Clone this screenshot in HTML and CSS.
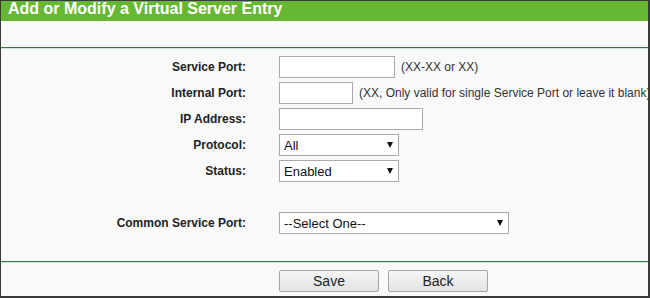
FILE: index.html
```html
<!DOCTYPE html>
<html lang="en">
<head>
    <meta charset="UTF-8">
    <title>Virtual Server</title>
    <link rel="stylesheet" href="styles.css">
</head>
<body>
    <div class="panel">
        <!-- Title bar -->
        <div class="title">Add or Modify a Virtual Server Entry</div>
        <div class="spacer"></div>
        <div class="divider"></div>

        <!-- Entry fields -->
        <form class="fields">
            <div class="row">
                <label class="label">Service Port:</label>
                <input type="text" class="field port">
                <span class="hint">(XX-XX or XX)</span>
            </div>
            <div class="row">
                <label class="label">Internal Port:</label>
                <input type="text" class="field internal">
                <span class="hint">(XX, Only valid for single Service Port or leave it blank)</span>
            </div>
            <div class="row">
                <label class="label">IP Address:</label>
                <input type="text" class="field ip">
            </div>
            <div class="row">
                <label class="label">Protocol:</label>
                <span class="select-wrap">
                    <select class="select">
                        <option>All</option>
                        <option>TCP</option>
                        <option>UDP</option>
                    </select>
                </span>
            </div>
            <div class="row">
                <label class="label">Status:</label>
                <span class="select-wrap">
                    <select class="select">
                        <option>Enabled</option>
                        <option>Disabled</option>
                    </select>
                </span>
            </div>
            <div class="row common">
                <label class="label">Common Service Port:</label>
                <span class="select-wrap wide">
                    <select class="select">
                        <option>--Select One--</option>
                    </select>
                </span>
            </div>
        </form>

        <div class="divider"></div>

        <!-- Buttons -->
        <div class="actions">
            <button type="button" class="btn">Save</button>
            <button type="button" class="btn">Back</button>
        </div>
    </div>
</body>
</html>
```

FILE: styles.css
```css
/* General Reset */
* {
    margin: 0;
    padding: 0;
    box-sizing: border-box;
}

body {
    font-family: 'Liberation Sans', Arial, sans-serif;
    background: #f9f9f9;
    color: #222;
    width: 650px;
    height: 298px;
    overflow: hidden;
}

/* Outer frame */
.panel {
    height: 298px;
    border-top: 1px solid #3a3a3a;
    border-left: 1px solid #3a3a3a;
    border-right: 2px solid #3a3a3a;
    border-bottom: 2px solid #3a3a3a;
    background: #f9f9f9;
    overflow: hidden;
}

/* Green title bar */
.title {
    height: 20px;
    line-height: 16px;
    padding-left: 7px;
    background: #66b833;
    color: #fff;
    font-size: 16px;
    font-weight: bold;
    white-space: nowrap;
}

.spacer {
    height: 26px;
}

.divider {
    height: 2px;
    border-top: 1px solid #2d7a4a;
    background: #cfe5d6;
}

/* Form rows */
.fields {
    display: flex;
    flex-direction: column;
    gap: 4px;
    padding-top: 7px;
    padding-bottom: 27px;
}

.row {
    display: flex;
    align-items: center;
    height: 22px;
    white-space: nowrap;
    overflow: hidden;
}

.row.common {
    margin-top: 26px;
}

.label {
    flex: none;
    width: 245px;
    margin-right: 33px;
    text-align: right;
    font-size: 12px;
    font-weight: bold;
    color: #222;
}

.field {
    flex: none;
    height: 22px;
    border: 1px solid #a9a9a9;
    background: #fff;
    font-family: inherit;
    font-size: 13px;
    padding: 0 4px;
    outline: none;
}

.field.port {
    width: 116px;
}

.field.internal {
    width: 74px;
}

.field.ip {
    width: 144px;
}

.hint {
    margin-left: 6px;
    font-size: 12px;
    color: #333;
}

/* Drop-downs */
.select-wrap {
    position: relative;
    display: block;
    flex: none;
    width: 120px;
    height: 22px;
}

.select-wrap.wide {
    width: 230px;
}

.select-wrap::after {
    content: "";
    position: absolute;
    right: 6px;
    top: 8px;
    border-left: 3.5px solid transparent;
    border-right: 3.5px solid transparent;
    border-top: 6px solid #111;
    pointer-events: none;
}

.select {
    -webkit-appearance: none;
    appearance: none;
    width: 100%;
    height: 22px;
    border: 1px solid #a9a9a9;
    border-radius: 0;
    background: #fff;
    color: #111;
    font-family: inherit;
    font-size: 13px;
    padding: 0 4px;
    outline: none;
}

/* Buttons */
.actions {
    display: flex;
    gap: 9px;
    padding-top: 7px;
    padding-left: 278px;
}

.btn {
    width: 100px;
    height: 22px;
    border: 1px solid #a6a6a6;
    border-radius: 2px;
    background: linear-gradient(#f6f6f6, #e2e2e2);
    color: #222;
    font-family: inherit;
    font-size: 14px;
    cursor: pointer;
}
```
